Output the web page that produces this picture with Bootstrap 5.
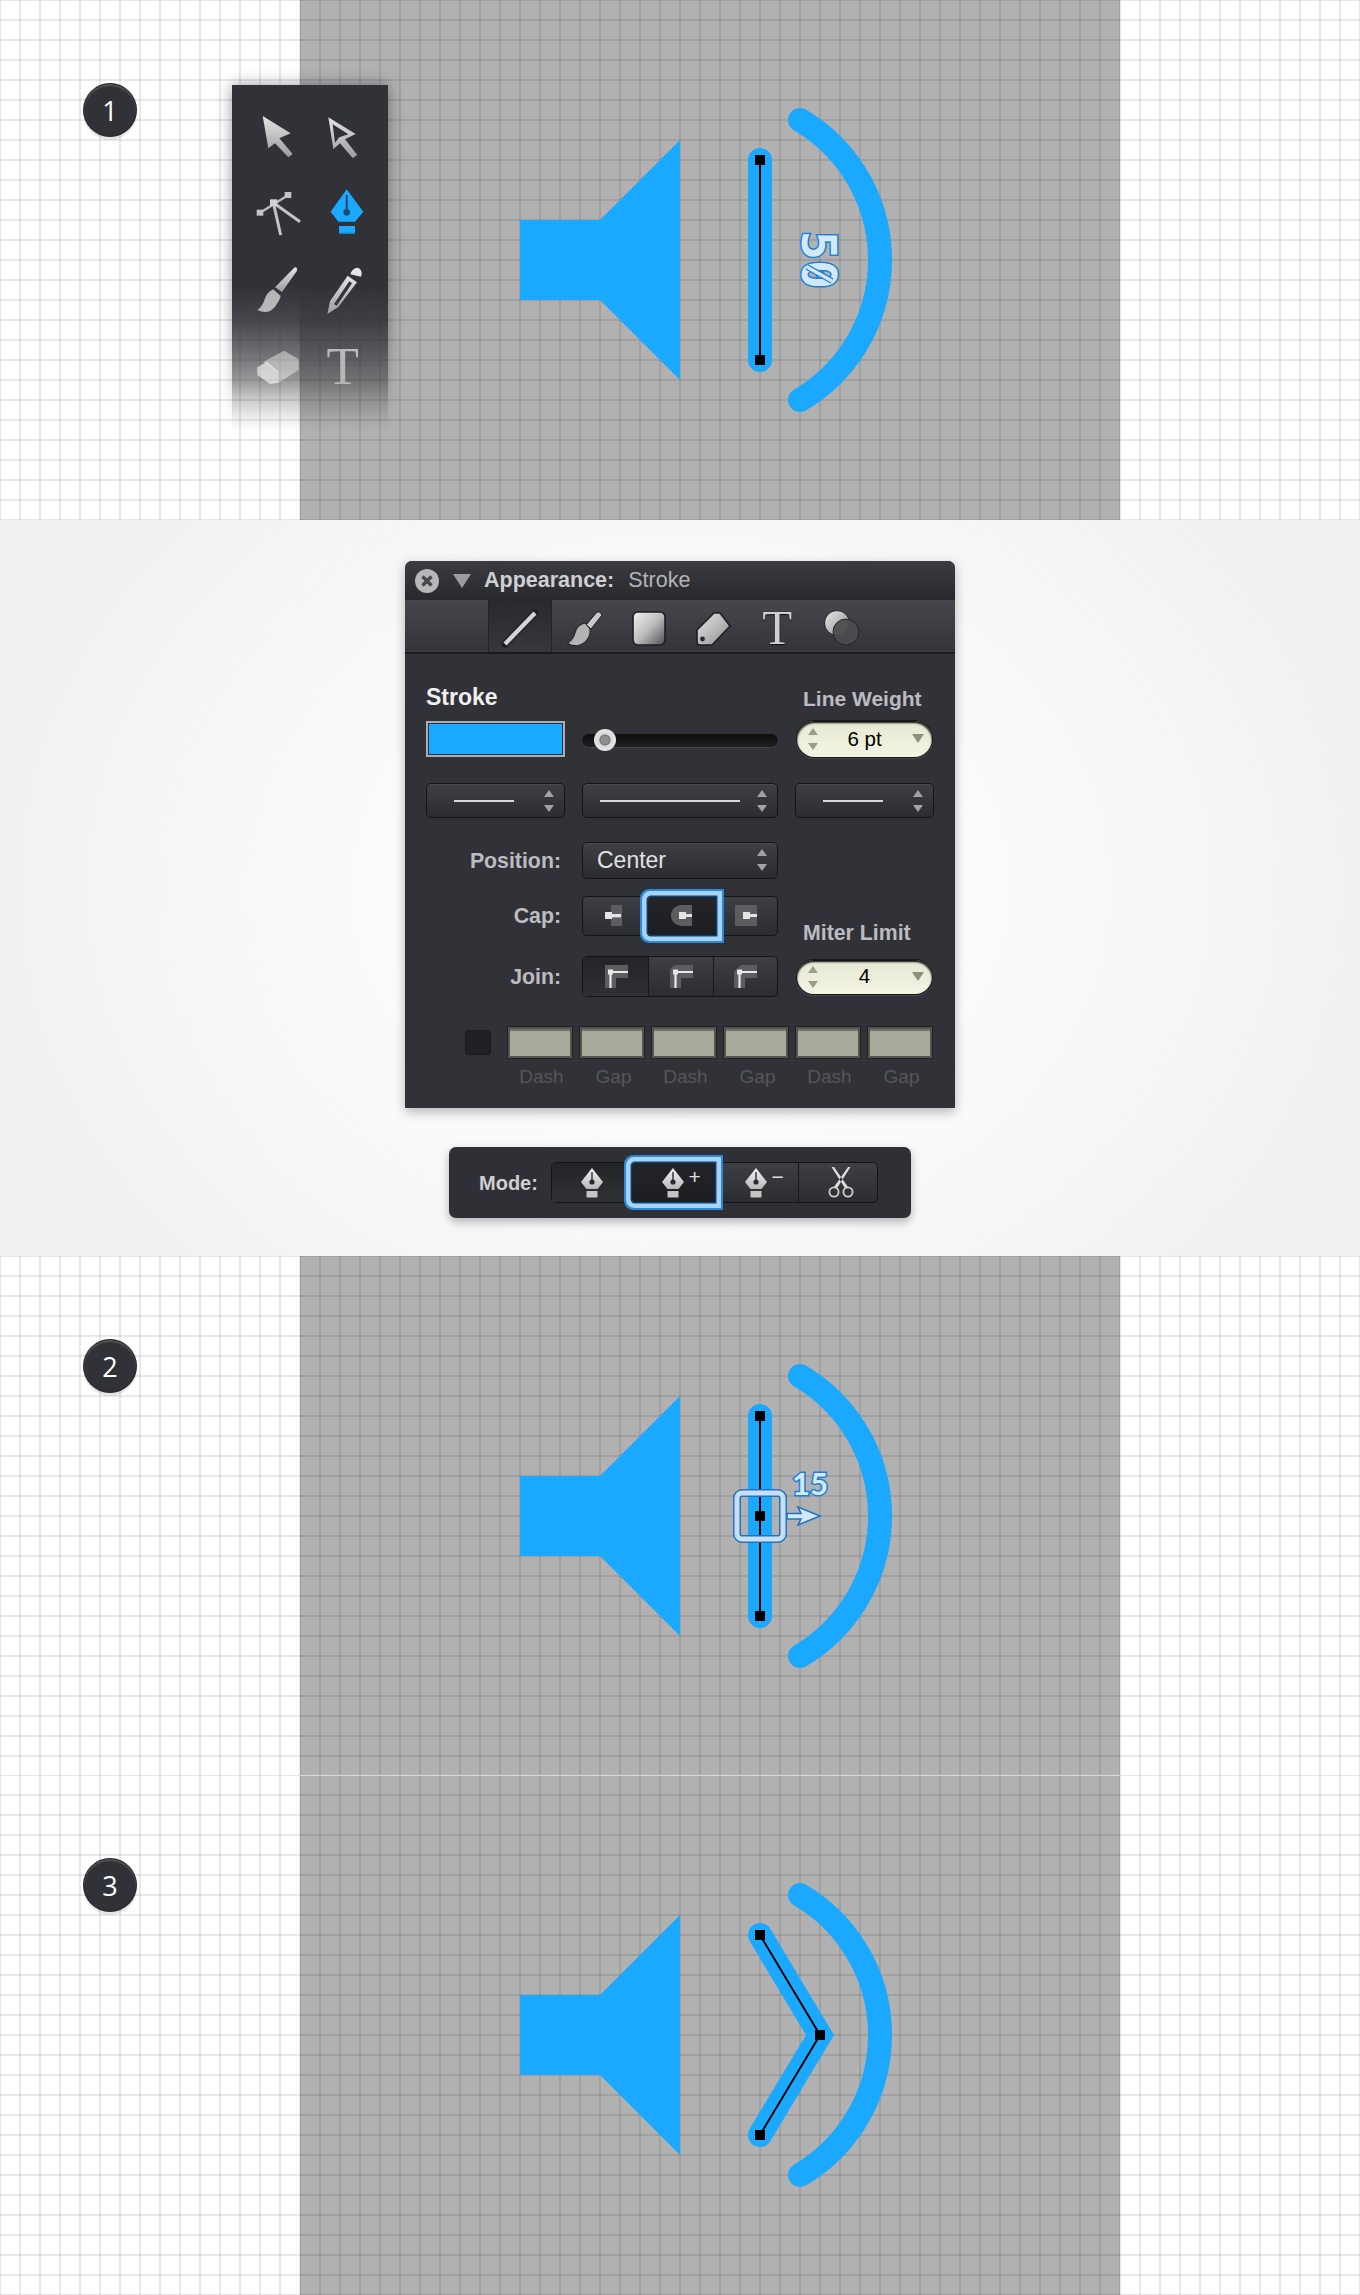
<!DOCTYPE html>
<html lang="en">
<head>
<meta charset="utf-8">
<title>Appearance stroke tutorial</title>
<link href="https://cdn.jsdelivr.net/npm/bootstrap@5.3.0/dist/css/bootstrap.min.css" rel="stylesheet">
<style>
body{margin:0;background:#fff;font-family:"Liberation Sans",Arial,sans-serif;}
.defs{position:absolute;width:0;height:0;}
.sheet{background-color:#fff;background-image:linear-gradient(to right,rgba(0,0,0,.085) 2px,transparent 2px),linear-gradient(to bottom,rgba(0,0,0,.085) 2px,transparent 2px);background-size:20px 20px;background-position:-1px -1px;overflow:hidden;}
.h520{height:520px;}.h519{height:519px;}
.gray-col{width:820px;margin-left:300px;background-color:#b1b1b1;background-image:linear-gradient(to right,rgba(0,0,0,.095) 2px,transparent 2px),linear-gradient(to bottom,rgba(0,0,0,.095) 2px,transparent 2px);background-size:20px 20px;background-position:-1px -1px;overflow:hidden;}
.gray-top{box-shadow:inset 0 1px 0 #d9d9d9;}
.gray-col svg{display:block;}
.step-badge{left:84px;top:84px;width:52px;height:52px;background:#313237;font-family:"Open Sans",sans-serif;font-size:27px;line-height:1;box-shadow:inset 0 2px 1px #505155,0 0 0 1px #222327,0 3px 1px 1px rgba(0,0,0,.1);}
.palette-wrap{left:212px;top:65px;width:196px;height:387px;padding:20px;-webkit-mask-image:linear-gradient(to bottom,#000 220px,rgba(0,0,0,.9) 255px,rgba(0,0,0,.72) 285px,rgba(0,0,0,.5) 315px,rgba(0,0,0,.25) 335px,rgba(0,0,0,.07) 355px,transparent 367px);mask-image:linear-gradient(to bottom,#000 220px,rgba(0,0,0,.9) 255px,rgba(0,0,0,.72) 285px,rgba(0,0,0,.5) 315px,rgba(0,0,0,.25) 335px,rgba(0,0,0,.07) 355px,transparent 367px);}
.palette{width:156px;height:347px;background:#313237;box-shadow:0 0 14px rgba(0,0,0,.4);}
.palette svg{display:block;}
.band{height:736px;background:radial-gradient(ellipse 680px 560px at 50% 50%,#fdfdfd 0%,#fafafa 55%,#f1f1f1 100%);}
.panel{width:550px;height:547px;margin-top:41px;background:#313237;border-radius:7px 7px 0 0;box-shadow:0 4px 12px rgba(0,0,0,.28);color:#bdbdc0;}
.title-bar{height:39px;background:linear-gradient(#3b3c41,#28292d);border-radius:7px 7px 0 0;padding-left:10px;font-size:21.5px;}
.title-bar b{color:#cfcfd2;margin-left:13px;}
.title-bar span{color:#b4b4b8;margin-left:14px;}
.tri{margin-left:14px;}
.tool-bar{height:54px;padding-left:83px;background:linear-gradient(#46474c,#333439);box-shadow:inset 0 -2px 0 #1b1b1d,inset 0 -3px 0 #3c3d42;}
.tool-tab{width:64.3px;height:52px;padding-top:3px;}
.tool-tab.on{background:linear-gradient(#28292d,#37383d);box-shadow:inset 1px 0 0 #232427,inset -1px 0 0 #232427;}
.tool-t{font-family:"Liberation Serif",serif;font-size:49px;line-height:40px;color:#cfcfcf;text-shadow:0 0 1px #111,0 1px 1px #111;}
.grid3{display:grid;grid-template-columns:139px 196px 139px;column-gap:17px;padding:0 21px;}
.r1{margin-top:31px;height:27px;}.r2{margin-top:9px;height:36px;}.r3{margin-top:26px;height:35px;}.r4{margin-top:24px;height:35px;}.r5{margin-top:19px;height:40px;}.r6{margin-top:20px;height:41px;}
.lbl{font-size:21.3px;font-weight:700;color:#bcbcc0;line-height:1;}
.lbl-big{font-size:23px;font-weight:700;color:#f0f0f0;line-height:1;margin-top:-2px;}
.lbl-r{padding-right:4px;padding-top:2px;}
.lbl-low{margin-bottom:-8px;padding-left:8px;}
.lbl-up{padding-left:8px;padding-top:3px;font-size:21px;}
.swatch{background:#1aa9ff;border:2px solid #aeaeb2;box-shadow:inset 0 0 0 1px #1c3446;}
.track{height:13px;background:linear-gradient(#0f0f10,#1f1f21);border-radius:7px;box-shadow:0 1px 0 #44454a;margin-top:13px;}
.thumb{left:12px;top:-5px;width:22px;height:22px;background:radial-gradient(circle at 50% 50%,#8f8f8f 0 4px,#6f6f6f 5px,#d8d8d8 6px,#f0f0f0 100%);}
.pill{height:36px;margin:0 2px;background:linear-gradient(#e7e8d2,#f3f4e2);border-radius:18px;box-shadow:inset 0 2px 2px #0a0a0a,0 0 0 1px #17171a,0 1px 1px 1px rgba(255,255,255,.12);color:#000;font-size:20.5px;}
.pill.mini{height:34px;align-self:center;}
.pill .ud{left:10px;top:50%;margin-top:-12px;}
.pill .dn{right:8px;top:50%;margin-top:-5px;}
.sel{background:linear-gradient(#3e3f44,#2c2d31);border:1px solid #141416;border-radius:5px;box-shadow:inset 0 1px 0 #4b4c51;color:#e1e1e3;font-size:23px;}
.sel .dash-line{height:2px;background:#d8d8d8;}
.ln60{width:60px;margin-left:27px;}.ln140{width:140px;margin-left:17px;}
.sel .ud{right:9px;top:50%;margin-top:-12px;}
.sel .cap-text{padding-left:14px;}
.seg{border:1px solid #141416;border-radius:5px;overflow:visible;background:linear-gradient(#3e3f44,#2c2d31);}
.seg .btn{padding:0;border:0;border-radius:0;background:transparent;display:flex;align-items:center;justify-content:center;height:100%;box-shadow:none;}
.seg .btn svg{display:block;}
.seg .btn.sep{border-left:1px solid #17181a;}
.seg .btn.dark{background:linear-gradient(#232427,#303135);}
.seg .btn.ring{background:linear-gradient(#232427,#1d1e21);border-radius:3px;box-shadow:0 0 0 1.5px #0d4476,0 0 0 6px #a6d4f9,0 0 0 8px #2d88d8;z-index:2;}
.seg .w66{flex:0 0 66px;}.seg .w68{flex:0 0 68px;}.seg .w62{flex:0 0 62px;}.seg .w64{flex:0 0 64px;}
.dash-row{margin-top:30px;padding-left:60px;gap:17px;}
.chk{width:26px;height:25px;margin-top:3px;background:#1f2127;border-radius:4px;box-shadow:inset 0 0 2px #111;}
.dash-set{gap:8px;}
.dash-item{width:64px;}
.dash-box{height:31px;background:#a9ab9d;box-shadow:inset 0 0 0 2px #55564f,inset 0 2px 1px 2px #6f7068,0 0 0 1px #1f1f21;border-radius:1px;}
.dash-name{margin-top:8px;padding-left:3px;font-size:19px;line-height:22px;color:#55565c;text-align:center;}
.mode-bar{width:462px;height:71px;margin-top:39px;padding-left:30px;background:#2f3035;border-radius:7px;box-shadow:0 4px 10px rgba(0,0,0,.28);color:#cfcfd2;font-size:20px;font-weight:700;gap:13px;}
.mode-seg{width:327px;height:41px;}
.seg .m81{flex:0 0 81px;}.seg .m85{flex:0 0 83px;}.seg .m83{flex:0 0 85px;}.seg .m76{flex:0 0 76px;}
.sup{color:#ddd;font-size:21px;font-weight:400;line-height:1;left:50%;top:3px;margin-left:15px;}
.sciss{margin-left:9px;}
</style>
</head>
<body>
<svg class="defs" aria-hidden="true">
<defs>
<linearGradient id="gIcon" x1="0" y1="0" x2="0" y2="1"><stop offset="0" stop-color="#e4e4e4"/><stop offset="1" stop-color="#9c9c9c"/></linearGradient>
<linearGradient id="gPen" x1="0" y1="0" x2="0" y2="1"><stop offset="0" stop-color="#f4f4f4"/><stop offset="1" stop-color="#b8b8b8"/></linearGradient>
<linearGradient id="gSq" x1="0" y1="0" x2="1" y2="1"><stop offset="0" stop-color="#f2f2f2"/><stop offset=".5" stop-color="#bdbdbd"/><stop offset="1" stop-color="#4f4f51"/></linearGradient>
<linearGradient id="gDiag" x1="0" y1="0" x2="1" y2="1"><stop offset="0" stop-color="#e8e8e8"/><stop offset="1" stop-color="#8d8d8d"/></linearGradient>
<symbol id="ud" viewBox="0 0 12 24"><path d="M6 1 L11 8 H1Z M1 16 H11 L6 23Z" fill="#a3a3a6"/></symbol>
<symbol id="udp" viewBox="0 0 12 24"><path d="M6 1 L11 8 H1Z M1 16 H11 L6 23Z" fill="#9b9b8e"/></symbol>
<symbol id="pen" viewBox="0 0 22 30"><path d="M11 0 L22 14 L16.5 21 H5.5 L0 14Z" fill="url(#gPen)"/><path d="M11 4 V13" stroke="#2a2b2f" stroke-width="1.4"/><circle cx="11" cy="14" r="2.6" fill="#2a2b2f"/><rect x="5.5" y="23" width="11" height="6.5" fill="#c4c4c4"/></symbol>
</defs>
</svg>

<section class="sheet h520 position-relative">
  <div class="gray-col h520">
    <svg width="820" height="520" viewBox="300 0 820 520" role="img" aria-label="Speaker shape with stroked line">
      <path d="M520 220 H600 L680 140 V380 L600 300 H520Z" fill="#1aa9ff"/>
      <path d="M760 160 V360" stroke="#1aa9ff" stroke-width="24" stroke-linecap="round"/>
      <path d="M800 120 A162.5 162.5 0 0 1 800 400" fill="none" stroke="#1aa9ff" stroke-width="24" stroke-linecap="round"/>
      <path d="M760 160 V360" stroke="#000" stroke-width="2"/>
      <rect x="755" y="155" width="10" height="10"/><rect x="755" y="355" width="10" height="10"/>
      <g transform="translate(802 231) rotate(90)">
        <text font-family="'DejaVu Sans Mono',monospace" font-weight="700" font-size="48" fill="#d3e8fb" stroke="#1d7ed2" stroke-width="3" style="paint-order:stroke">50</text>
        <path d="M36 -5 L50 -30" stroke="#1d7ed2" stroke-width="6"/>
        <path d="M36 -5 L50 -30" stroke="#d3e8fb" stroke-width="3.4"/>
      </g>
    </svg>
  </div>
  <div class="step-badge position-absolute rounded-circle d-flex align-items-center justify-content-center text-white">1</div>
  <div class="palette-wrap position-absolute">
    <div class="palette">
      <svg width="156" height="347" viewBox="36 15 468 1041" role="img" aria-label="Tools">
        <path d="M128 108 L212 160 L178 175 L218 222 L205 232 L165 190 L145 205Z" fill="url(#gIcon)"/>
        <path fill-rule="evenodd" d="M325 112 L407 162 L375 178 L412 225 L398 234 L360 190 L340 208Z M338 133 L345 188 L358 172 L385 163Z" fill="url(#gIcon)"/>
        <path d="M118 400 L205 345" stroke="#bdbdbd" stroke-width="7"/>
        <path d="M160 368 L240 425 M160 368 L182 465" stroke="#c4c4c4" stroke-width="9"/>
        <rect x="110" y="389" width="20" height="18" fill="#c4c4c4"/><rect x="194" y="336" width="20" height="18" fill="#c4c4c4"/><rect x="150" y="358" width="22" height="20" fill="#d2d2d2"/>
        <path d="M380 328 L430 395 L405 425 H355 L332 395Z" fill="#1aa9ff"/>
        <path d="M380 345 V395" stroke="#17344c" stroke-width="5"/><circle cx="380" cy="397" r="10" fill="#1d4a6d"/>
        <rect x="357" y="438" width="48" height="24" fill="#1aa9ff"/><rect x="357" y="458" width="48" height="4" fill="#1680c2"/>
        <path d="M224 562 Q235 562 230 574 L186 636 L165 622Z" fill="url(#gIcon)"/>
        <path d="M160 628 Q142 636 135 655 Q128 680 112 690 Q145 705 165 680 Q180 660 182 648Z" fill="#b3b3b3"/>
        <path fill-rule="evenodd" d="M322 702 L330 664 L383 587 L411 607 L354 682Z M342 672 L388 604 L396 610 L350 678Z" fill="url(#gIcon)"/>
        <path d="M391 583 Q398 562 414 563 Q430 570 423 590Z" fill="#e6e6e6"/>
        <path d="M130 845 L192 812 L236 838 V870 L176 908 V880Z" fill="#a5a5a5" fill-opacity=".75"/>
        <path d="M112 862 L140 845 L176 875 V908 L150 912 L112 885Z" fill="#e6e6e6" fill-opacity=".7"/>
        <path d="M112 868 L150 888 L176 875 M150 888 V912" fill="none" stroke="#b4b4b4" stroke-width="2"/>
        <text x="368" y="912" text-anchor="middle" font-family="'Liberation Serif',serif" font-size="159" fill="#bdbdbd">T</text>
      </svg>
    </div>
  </div>
</section>

<section class="band d-flex flex-column align-items-center">
  <div class="panel">
    <div class="title-bar d-flex align-items-center">
      <svg width="24" height="24" viewBox="0 0 24 24" aria-hidden="true"><circle cx="12" cy="12" r="12" fill="#b7b7b9"/><path d="M7.5 7.5 L16.5 16.5 M16.5 7.5 L7.5 16.5" stroke="#46474b" stroke-width="3.4"/></svg>
      <svg class="tri" width="18" height="14" viewBox="0 0 18 14" aria-hidden="true"><path d="M0 0 H18 L9 14Z" fill="#9c9c9e"/></svg>
      <b>Appearance:</b><span>Stroke</span>
    </div>
    <div class="tool-bar d-flex">
      <div class="tool-tab on d-flex align-items-center justify-content-center"><svg width="40" height="40" viewBox="0 0 40 40" aria-hidden="true"><path d="M5 36 L35 5" stroke="#1e1f21" stroke-width="7" stroke-linecap="round"/><path d="M5 36 L35 5" stroke="#d4d4d4" stroke-width="4.4"/></svg></div>
      <div class="tool-tab d-flex align-items-center justify-content-center"><svg width="40" height="40" viewBox="0 0 40 40" aria-hidden="true"><path d="M36 4 L38 7 L27 21 L22 17 L33 4Z" fill="#c9c9c9" stroke="#1e1f21"/><path d="M21 15 Q13 17 11 25 Q9 33 3 35 Q13 41 21 34 Q27 28 26 21Z" fill="#b4b4b4" stroke="#1e1f21"/></svg></div>
      <div class="tool-tab d-flex align-items-center justify-content-center"><svg width="40" height="40" viewBox="0 0 40 40" aria-hidden="true"><rect x="4" y="4" width="32" height="33" rx="5" fill="url(#gSq)" stroke="#1e1f21" stroke-width="1.6"/></svg></div>
      <div class="tool-tab d-flex align-items-center justify-content-center"><svg width="40" height="40" viewBox="0 0 40 40" aria-hidden="true"><path d="M4 22 L21 5 H27 L37 18 L19 37 H7 Q4 37 4 33Z" fill="url(#gDiag)" stroke="#1e1f21" stroke-width="1.6"/><circle cx="9.5" cy="31" r="2.4" fill="#2a2b2f"/></svg></div>
      <div class="tool-tab d-flex align-items-center justify-content-center"><span class="tool-t">T</span></div>
      <div class="tool-tab d-flex align-items-center justify-content-center"><svg width="40" height="40" viewBox="0 0 40 40" aria-hidden="true"><circle cx="15" cy="15" r="12.5" fill="url(#gDiag)" stroke="#1e1f21"/><circle cx="24" cy="24" r="13" fill="#4a4b4d" fill-opacity=".93" stroke="#242527"/></svg></div>
    </div>

    <div class="grid3 r1">
      <div class="lbl-big align-self-center">Stroke</div><div></div><div class="lbl lbl-up">Line Weight</div>
    </div>
    <div class="grid3 r2">
      <div class="swatch"></div>
      <div class="track position-relative"><div class="thumb position-absolute rounded-circle"></div></div>
      <div class="pill position-relative d-flex align-items-center justify-content-center">6 pt
        <svg class="ud position-absolute" width="12" height="24" aria-hidden="true"><use href="#udp"/></svg>
        <svg class="dn position-absolute" width="12" height="9" viewBox="0 0 12 9" aria-hidden="true"><path d="M0 0 H12 L6 9Z" fill="#8e8e84"/></svg>
      </div>
    </div>
    <div class="grid3 r3">
      <div class="sel position-relative d-flex align-items-center"><div class="dash-line ln60"></div><svg class="ud position-absolute" width="12" height="24" aria-hidden="true"><use href="#ud"/></svg></div>
      <div class="sel position-relative d-flex align-items-center"><div class="dash-line ln140"></div><svg class="ud position-absolute" width="12" height="24" aria-hidden="true"><use href="#ud"/></svg></div>
      <div class="sel position-relative d-flex align-items-center"><div class="dash-line ln60"></div><svg class="ud position-absolute" width="12" height="24" aria-hidden="true"><use href="#ud"/></svg></div>
    </div>
    <div class="grid3 r4">
      <div class="lbl lbl-r text-end align-self-center">Position:</div>
      <div class="sel position-relative d-flex align-items-center"><span class="cap-text">Center</span><svg class="ud position-absolute" width="12" height="24" aria-hidden="true"><use href="#ud"/></svg></div>
    </div>
    <div class="grid3 r5">
      <div class="lbl lbl-r text-end align-self-center">Cap:</div>
      <div class="seg btn-group d-flex">
        <button class="btn w66" type="button" aria-label="Butt cap"><svg width="22" height="22" viewBox="0 0 22 22" aria-hidden="true"><rect x="6" y="0" width="11" height="21" fill="#5c5d61"/><rect x="0" y="9" width="16" height="3.4" fill="#e4e4e4"/><rect x="0" y="7" width="7" height="7" fill="#e4e4e4"/></svg></button>
        <button class="btn ring w68 position-relative" type="button" aria-label="Round cap"><svg width="24" height="22" viewBox="0 0 24 22" aria-hidden="true"><path d="M22 0 H12 A11 10.5 0 0 0 12 21 H22Z" fill="#5c5d61"/><rect x="9" y="7" width="7" height="7" fill="#e4e4e4"/><rect x="9" y="9" width="13" height="3" fill="#e4e4e4"/></svg></button>
        <button class="btn w62" type="button" aria-label="Square cap"><svg width="22" height="22" viewBox="0 0 22 22" aria-hidden="true"><rect x="0" y="0" width="22" height="21" fill="#5c5d61"/><rect x="8" y="7" width="7" height="7" fill="#e4e4e4"/><rect x="8" y="9" width="14" height="3" fill="#e4e4e4"/></svg></button>
      </div>
      <div class="lbl lbl-low align-self-end">Miter Limit</div>
    </div>
    <div class="grid3 r6">
      <div class="lbl lbl-r text-end align-self-center">Join:</div>
      <div class="seg btn-group d-flex">
        <button class="btn dark w66" type="button" aria-label="Miter join"><svg width="23" height="23" viewBox="0 0 23 23" aria-hidden="true"><path d="M0 0 H23 V13 H11 V23 H0Z" fill="#5c5d61"/><path d="M5.5 23 V7 H23" fill="none" stroke="#e8e8e8" stroke-width="2.2"/><rect x="3" y="4.5" width="5" height="5" fill="#e8e8e8"/></svg></button>
        <button class="btn sep w66" type="button" aria-label="Round join"><svg width="23" height="23" viewBox="0 0 23 23" aria-hidden="true"><path d="M8 0 H23 V13 H11 V23 H0 V8 Q0 0 8 0Z" fill="#5c5d61"/><path d="M5.5 23 V7 H23" fill="none" stroke="#e8e8e8" stroke-width="2.2"/><rect x="3" y="4.5" width="5" height="5" fill="#e8e8e8"/></svg></button>
        <button class="btn sep w64" type="button" aria-label="Bevel join"><svg width="23" height="23" viewBox="0 0 23 23" aria-hidden="true"><path d="M7 0 H23 V13 H11 V23 H0 V7Z" fill="#5c5d61"/><path d="M5.5 23 V7 H23" fill="none" stroke="#e8e8e8" stroke-width="2.2"/><rect x="3" y="4.5" width="5" height="5" fill="#e8e8e8"/></svg></button>
      </div>
      <div class="pill mini position-relative d-flex align-items-center justify-content-center">4
        <svg class="ud position-absolute" width="12" height="24" aria-hidden="true"><use href="#udp"/></svg>
        <svg class="dn position-absolute" width="12" height="9" viewBox="0 0 12 9" aria-hidden="true"><path d="M0 0 H12 L6 9Z" fill="#8e8e84"/></svg>
      </div>
    </div>
    <div class="dash-row d-flex">
      <div class="chk"></div>
      <div class="dash-set d-flex">
        <div class="dash-item"><div class="dash-box"></div><div class="dash-name">Dash</div></div>
        <div class="dash-item"><div class="dash-box"></div><div class="dash-name">Gap</div></div>
        <div class="dash-item"><div class="dash-box"></div><div class="dash-name">Dash</div></div>
        <div class="dash-item"><div class="dash-box"></div><div class="dash-name">Gap</div></div>
        <div class="dash-item"><div class="dash-box"></div><div class="dash-name">Dash</div></div>
        <div class="dash-item"><div class="dash-box"></div><div class="dash-name">Gap</div></div>
      </div>
    </div>
  </div>

  <div class="mode-bar d-flex align-items-center">
    <span>Mode:</span>
    <div class="seg mode-seg btn-group d-flex">
      <button class="btn dark m81" type="button" aria-label="Pen"><svg width="22" height="30" aria-hidden="true"><use href="#pen"/></svg></button>
      <button class="btn ring m85 position-relative" type="button" aria-label="Add anchor"><svg width="22" height="30" aria-hidden="true"><use href="#pen"/></svg><span class="sup position-absolute">+</span></button>
      <button class="btn m83 position-relative" type="button" aria-label="Delete anchor"><svg width="22" height="30" aria-hidden="true"><use href="#pen"/></svg><span class="sup position-absolute">−</span></button>
      <button class="btn sep m76" type="button" aria-label="Scissors"><svg class="sciss" width="26" height="32" viewBox="0 0 26 32" aria-hidden="true"><path d="M3.5 0 L6 0 L20 20 L17.5 22Z M22.5 0 L20 0 L6 20 L8.5 22Z" fill="#dcdcdc"/><circle cx="6" cy="25" r="4.6" fill="none" stroke="#cfcfcf" stroke-width="1.8"/><circle cx="20" cy="25" r="4.6" fill="none" stroke="#cfcfcf" stroke-width="1.8"/></svg></button>
    </div>
  </div>
</section>

<section class="sheet h519 position-relative">
  <div class="gray-col h519">
    <svg width="820" height="520" viewBox="300 0 820 520" role="img" aria-label="Line with new anchor point">
      <path d="M520 220 H600 L680 140 V380 L600 300 H520Z" fill="#1aa9ff"/>
      <path d="M760 160 V360" stroke="#1aa9ff" stroke-width="24" stroke-linecap="round"/>
      <path d="M800 120 A162.5 162.5 0 0 1 800 400" fill="none" stroke="#1aa9ff" stroke-width="24" stroke-linecap="round"/>
      <path d="M760 160 V360" stroke="#000" stroke-width="2"/>
      <rect x="755" y="155" width="10" height="10"/><rect x="755" y="355" width="10" height="10"/><rect x="755" y="255" width="10" height="10"/>
      <rect x="737" y="237" width="46" height="46" rx="5" fill="none" stroke="#2374bd" stroke-width="8"/>
      <rect x="737" y="237" width="46" height="46" rx="5" fill="none" stroke="#c6def8" stroke-width="5"/>
      <path d="M787 257.5 H801 L798 251 L820 260 L798 269 L801 263 H787Z" fill="#d3e8fb" stroke="#2374bd" stroke-width="1.6"/>
      <text x="792" y="239" font-family="Lato,sans-serif" font-weight="700" font-size="31" fill="#d3e8fb" stroke="#1d7ed2" stroke-width="3" style="paint-order:stroke">15</text>
    </svg>
  </div>
  <div class="step-badge position-absolute rounded-circle d-flex align-items-center justify-content-center text-white">2</div>
</section>

<section class="sheet h520 position-relative">
  <div class="gray-col gray-top h520">
    <svg width="820" height="520" viewBox="300 0 820 520" role="img" aria-label="Line bent into a chevron">
      <path d="M520 220 H600 L680 140 V380 L600 300 H520Z" fill="#1aa9ff"/>
      <path d="M760 160 L820 260 L760 360" fill="none" stroke="#1aa9ff" stroke-width="24" stroke-linecap="round" stroke-miterlimit="4"/>
      <path d="M800 120 A162.5 162.5 0 0 1 800 400" fill="none" stroke="#1aa9ff" stroke-width="24" stroke-linecap="round"/>
      <path d="M760 160 L820 260 L760 360" fill="none" stroke="#000" stroke-width="2"/>
      <rect x="755" y="155" width="10" height="10"/><rect x="755" y="355" width="10" height="10"/><rect x="815" y="255" width="10" height="10"/>
    </svg>
  </div>
  <div class="step-badge position-absolute rounded-circle d-flex align-items-center justify-content-center text-white">3</div>
</section>
<script src="https://cdn.jsdelivr.net/npm/bootstrap@5.3.0/dist/js/bootstrap.bundle.min.js"></script>
</body>
</html>
